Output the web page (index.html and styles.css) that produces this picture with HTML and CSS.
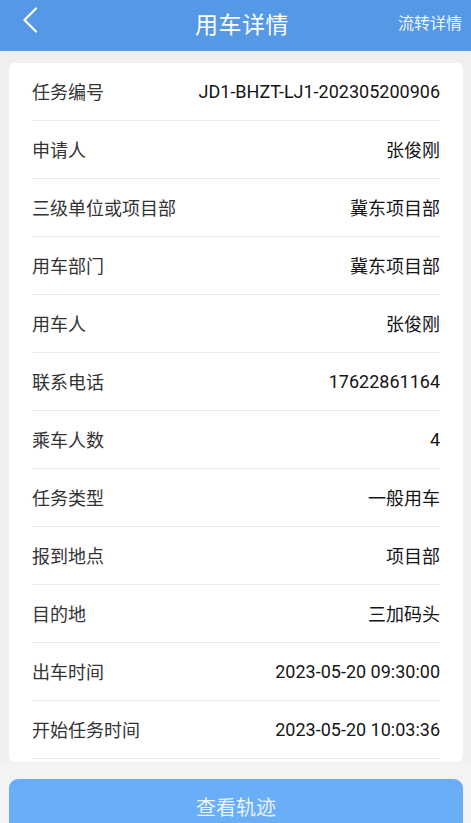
FILE: index.html
```html
<!DOCTYPE html>
<html lang="zh">
<head>
<meta charset="utf-8">
<title>用车详情</title>
<link rel="stylesheet" href="styles.css">
</head>
<body>
<div class="app">
  <header class="topbar">
    <span class="back">
      <svg width="16" height="26" viewBox="0 0 16 26"><path d="M14 1.5 L2.5 13 L14 24.5" fill="none" stroke="#fff" stroke-width="2.2" stroke-linecap="round" stroke-linejoin="round"/></svg>
    </span>
    <h1 class="title">用车详情</h1>
    <span class="action">流转详情</span>
  </header>
  <main class="content">
    <section class="card">
      <div class="row"><span class="label">任务编号</span><span class="value">JD1-BHZT-LJ1-202305200906</span></div>
      <div class="row"><span class="label">申请人</span><span class="value">张俊刚</span></div>
      <div class="row"><span class="label">三级单位或项目部</span><span class="value">冀东项目部</span></div>
      <div class="row"><span class="label">用车部门</span><span class="value">冀东项目部</span></div>
      <div class="row"><span class="label">用车人</span><span class="value">张俊刚</span></div>
      <div class="row"><span class="label">联系电话</span><span class="value">17622861164</span></div>
      <div class="row"><span class="label">乘车人数</span><span class="value">4</span></div>
      <div class="row"><span class="label">任务类型</span><span class="value">一般用车</span></div>
      <div class="row"><span class="label">报到地点</span><span class="value">项目部</span></div>
      <div class="row"><span class="label">目的地</span><span class="value">三加码头</span></div>
      <div class="row"><span class="label">出车时间</span><span class="value">2023-05-20 09:30:00</span></div>
      <div class="row"><span class="label">开始任务时间</span><span class="value">2023-05-20 10:03:36</span></div>
    </section>
  </main>
  <footer class="footer">
    <button class="track-btn">查看轨迹</button>
  </footer>
</div>
</body>
</html>
```
FILE: styles.css
```css
* { box-sizing: border-box; }
html, body { margin: 0; padding: 0; }
body {
  font-family: Roboto, "Noto Sans CJK SC", sans-serif;
  background: #efefef;
  width: 471px;
  height: 823px;
  overflow: hidden;
}
.app {
  display: flex;
  flex-direction: column;
  height: 823px;
}
.topbar {
  height: 51px;
  background: #5598e6;
  display: grid;
  grid-template-columns: 1fr auto 1fr;
  align-items: center;
  padding: 0 9px 0 22px;
  color: #fff;
  flex: none;
}
.back { display: flex; align-items: center; height: 26px; margin-top: -12px; }
.title {
  margin: 0;
  font-size: 23px;
  font-weight: normal;
  margin-top: -6px;
  letter-spacing: 0.5px;
}
.action {
  justify-self: end;
  font-size: 16px;
  margin-top: -8px;
  color: #eef5fd;
}
.content {
  flex: 1;
  overflow: hidden;
  padding: 12px 8px 0 9px;
}
.card {
  background: #fff;
  border-radius: 6px;
  padding: 0 23px 3px 23px;
}
.row {
  height: 58px;
  display: flex;
  justify-content: space-between;
  align-items: center;
  border-bottom: 1px solid #ececec;
  font-size: 18px;
  padding-bottom: 1px;
}
.label { color: #333; }
.value { color: #151515; }
.footer {
  flex: none;
  height: 60px;
  padding: 16px 8px 0 9px;
  background: #f3f3f3;
}
.track-btn {
  width: 100%;
  height: 60px;
  border: none;
  border-radius: 9px 9px 0 0;
  background: #69aef7;
  color: #eaf3fe;
  font-family: Roboto, "Noto Sans CJK SC", sans-serif;
  font-size: 20px;
  padding: 0 0 6px;
}
```
